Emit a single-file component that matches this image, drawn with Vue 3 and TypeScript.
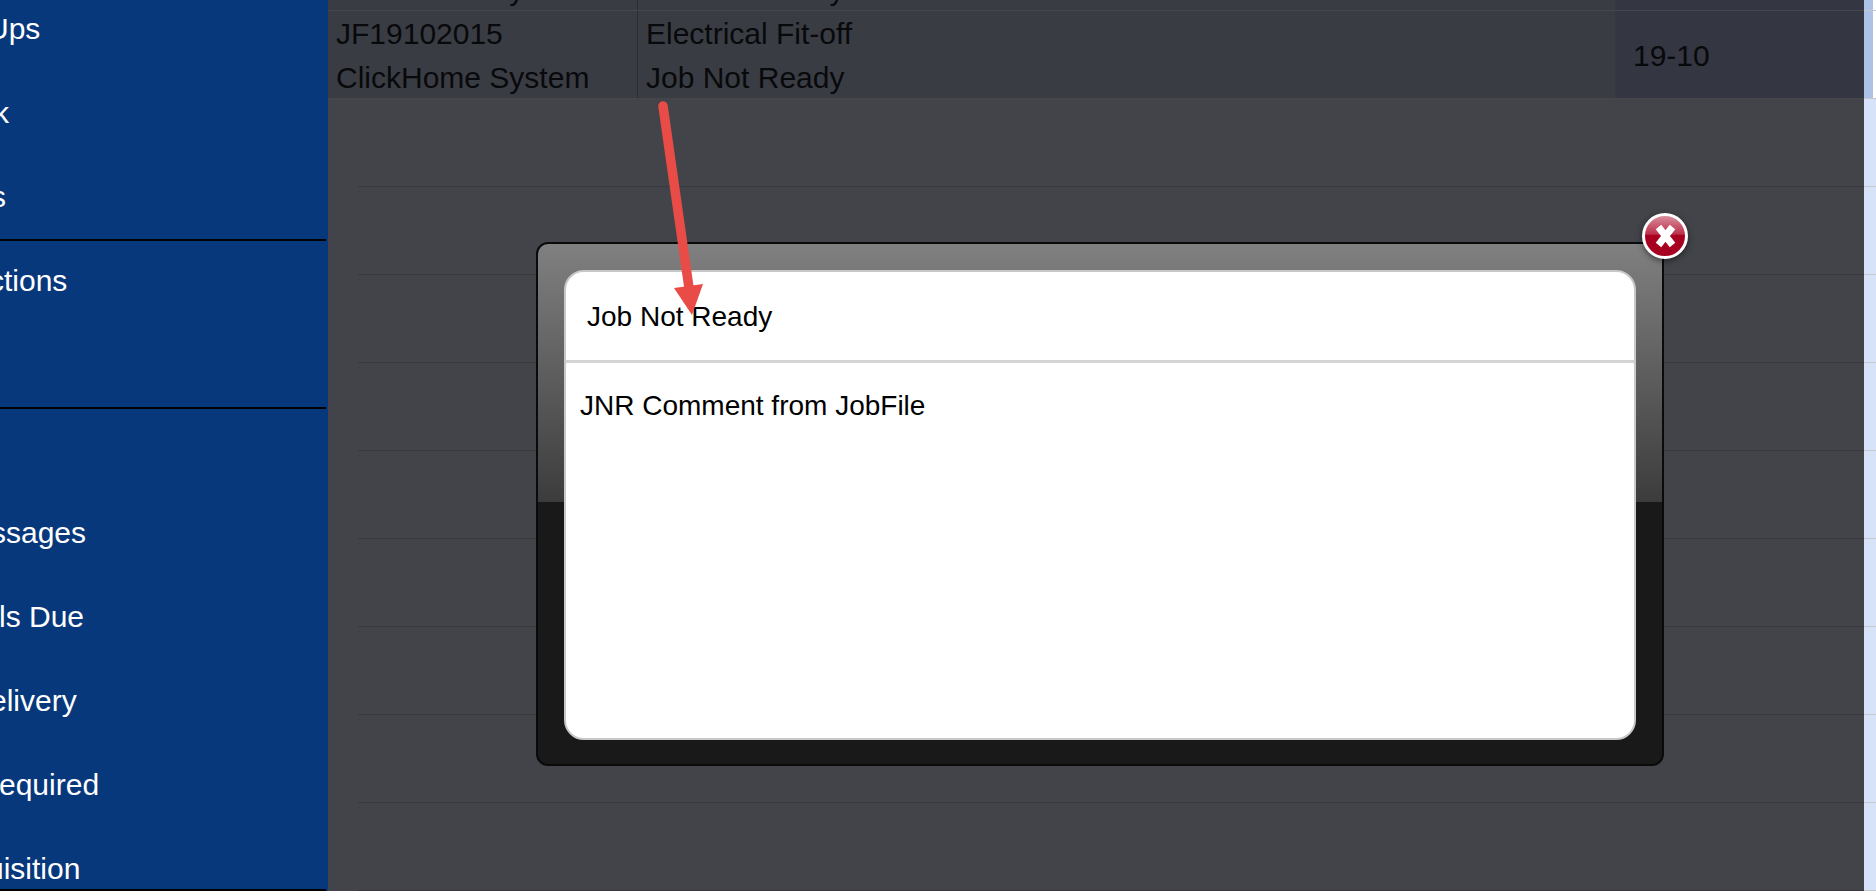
<script setup lang="ts">
const navGroups = [
    [
        { label: 'Ups', x: -13 },
        { label: 'k', x: -6 },
        { label: 's', x: -9 },
    ],
    [
        { label: 'ctions', x: -11 },
        { label: '', x: 0 },
    ],
    [
        { label: '', x: 0 },
        { label: 'ssages', x: -9 },
        { label: 'ls Due', x: -1 },
        { label: 'elivery', x: -10 },
        { label: 'equired', x: -1 },
        { label: 'uisition', x: -13 },
    ],
];

const emptyRows = 9;
</script>

<template>
    <div class="page">
        <aside class="sidebar">
            <div v-for="(group, g) in navGroups" :key="g" class="nav-group">
                <div v-for="(item, i) in group" :key="i" class="nav-item">
                    <span :style="{ marginLeft: item.x + 'px' }">{{ item.label }}</span>
                </div>
            </div>
        </aside>

        <main class="main">
            <div class="job-row">
                <div class="col-job">
                    <div class="cell-line">&nbsp;</div>
                    <div class="cell-line">ClickHome System</div>
                </div>
                <div class="col-task">
                    <div class="cell-line">&nbsp;</div>
                    <div class="cell-line">Job Not Ready</div>
                </div>
                <div class="col-date"></div>
            </div>
            <div class="job-row">
                <div class="col-job">
                    <div class="cell-line">JF19102015</div>
                    <div class="cell-line">ClickHome System</div>
                </div>
                <div class="col-task">
                    <div class="cell-line">Electrical Fit-off</div>
                    <div class="cell-line">Job Not Ready</div>
                </div>
                <div class="col-date">19-10</div>
            </div>
            <div v-for="n in emptyRows" :key="n" class="empty-row"></div>
        </main>

        <div class="scroll-strip">
            <div class="strip-top"></div>
            <div class="strip-rest"></div>
        </div>

        <div class="modal" role="dialog" aria-labelledby="modal-title">
            <div class="modal-sheet">
                <div id="modal-title" class="modal-title">Job Not Ready</div>
                <div class="modal-body">JNR Comment from JobFile</div>
            </div>
            <button type="button" class="modal-close" aria-label="Close">
                <svg viewBox="0 0 48 48" width="48" height="48">
                    <defs>
                        <linearGradient id="close-fill" x1="0" y1="0" x2="0" y2="1">
                            <stop offset="0" stop-color="#dc94a3" />
                            <stop offset="0.46" stop-color="#bc2f4b" />
                            <stop offset="0.48" stop-color="#a80020" />
                            <stop offset="1" stop-color="#a80020" />
                        </linearGradient>
                    </defs>
                    <circle cx="24" cy="24" r="21.5" fill="url(#close-fill)" stroke="#fff" stroke-width="3" />
                    <path d="M17.5 15 L31.5 33 M31.5 15 L17.5 33" stroke="#fff" stroke-width="7" fill="none" />
                </svg>
            </button>
        </div>

        <svg class="arrow" viewBox="0 0 1876 891" width="1876" height="891" aria-hidden="true">
            <path d="M663 106 L689 288" stroke="#e94c46" stroke-width="9.5" stroke-linecap="round" fill="none" />
            <path d="M674 288 L703 284 L692 315 Z" fill="#e94c46" />
        </svg>
    </div>
</template>

<style scoped>
.page {
    position: relative;
    display: flex;
    width: 1876px;
    height: 891px;
    overflow: hidden;
    background: #424449;
    font-family: "Liberation Sans", Arial, sans-serif;
}
.sidebar {
    position: relative;
    flex: 0 0 328px;
    height: 904px;
    margin-top: -13px;
    overflow: hidden;
    background: #07387c;
    color: #fff;
    font-size: 30px;
}
.sidebar::after {
    content: "";
    position: absolute;
    left: 0;
    bottom: 0;
    width: 326px;
    height: 2px;
    background: #000;
}
.nav-group + .nav-group {
    width: 326px;
    border-top: 2px solid #000;
}
.nav-group + .nav-group .nav-item:first-child {
    margin-top: -2px;
}
.nav-item {
    height: 84px;
    line-height: 84px;
    white-space: nowrap;
}
.main {
    flex: 1 1 auto;
    height: 891px;
    overflow: hidden;
    color: #08090b;
    font-size: 30px;
}
.job-row {
    display: flex;
    height: 88px;
    box-sizing: border-box;
    background: #3a3c44;
    border-bottom: 1px solid #46474b;
}
.job-row:first-child {
    margin-top: -77px;
}
.col-job {
    flex: 0 0 310px;
    box-sizing: border-box;
    padding: 1px 0 0 8px;
    border-right: 1px solid #2c2d33;
}
.col-task {
    flex: 1 1 auto;
    padding: 1px 0 0 8px;
}
.col-date {
    flex: 0 0 249px;
    box-sizing: border-box;
    padding: 1px 0 0 18px;
    line-height: 88px;
    background: #343642;
}
.cell-line {
    height: 44px;
    line-height: 44px;
    white-space: nowrap;
}
.empty-row {
    height: 88px;
    box-sizing: border-box;
    margin-left: 30px;
    border-bottom: 1px solid #38393c;
}
.scroll-strip {
    flex: 0 0 12px;
    display: flex;
    flex-direction: column;
}
.strip-top {
    flex: 0 0 99px;
    box-sizing: border-box;
    border-bottom: 1px solid #c6c8cf;
    background:
        linear-gradient(#c6c8cf, #c6c8cf) 0 10px / 100% 1px no-repeat,
        linear-gradient(to right, #aec2e8 9px, #fff 9px);
}
.strip-rest {
    flex: 1 1 auto;
    background: repeating-linear-gradient(to bottom, #d7e3f8 0, #d7e3f8 87px, #c6c8cf 87px, #c6c8cf 88px);
}
.modal {
    position: absolute;
    left: 536px;
    top: 242px;
    width: 1128px;
    height: 524px;
    box-sizing: border-box;
    padding: 26px 26px 24px 26px;
    border: 2px solid #0a0a0a;
    border-radius: 12px;
    background: linear-gradient(to bottom, #808080 0, #3c3c3c 258px, #191919 258px, #191919 100%);
}
.modal-sheet {
    height: 100%;
    box-sizing: border-box;
    border: 2px solid #c8c8c8;
    border-radius: 20px;
    background: #fff;
    overflow: hidden;
    color: #000;
    font-size: 28px;
}
.modal-title {
    height: 91px;
    line-height: 90px;
    padding-left: 21px;
    box-sizing: border-box;
    border-bottom: 3px solid #d4d4d4;
}
.modal-body {
    padding: 23px 14px;
    line-height: 40px;
}
.modal-close {
    position: absolute;
    right: -27px;
    top: -32px;
    width: 48px;
    height: 48px;
    padding: 0;
    border: none;
    background: transparent;
    border-radius: 50%;
    filter: drop-shadow(0 2px 3px rgba(0, 0, 0, 0.5));
    cursor: pointer;
}
.arrow {
    position: absolute;
    left: 0;
    top: 0;
    pointer-events: none;
}
</style>
